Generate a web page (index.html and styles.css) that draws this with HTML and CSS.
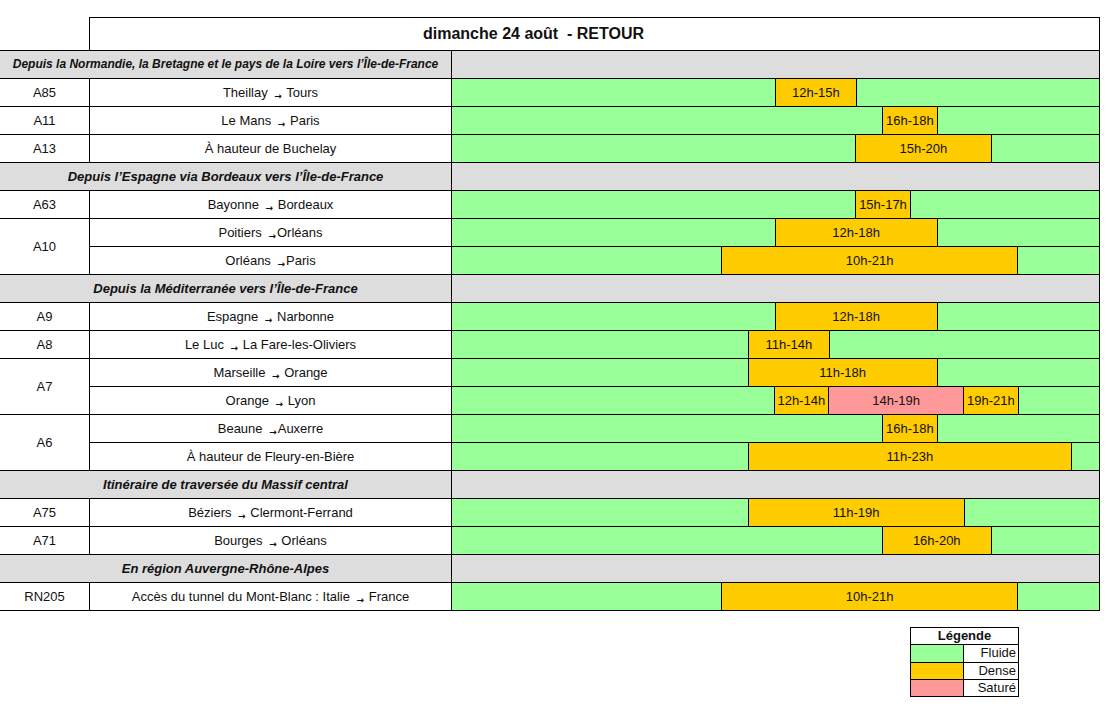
FILE: index.html
```html
<!DOCTYPE html>
<html lang="fr">
<head>
<meta charset="utf-8">
<title>dimanche 24 août - RETOUR</title>
<link rel="stylesheet" href="styles.css">
</head>
<body>
<div class="sheet">
  <div class="title">dimanche 24 août &nbsp;- RETOUR</div>
  <div class="rows">
    <div class="section"><div class="sec-label small">Depuis la Normandie, la Bretagne et le pays de la Loire vers l’Île-de-France</div><div class="sec-tl"></div></div>

    <div class="group">
      <div class="road">A85</div>
      <div class="lines">
        <div class="line"><div class="route">Theillay <span class="arr">→</span> Tours</div>
          <div class="tl"><div class="seg g" style="flex-grow:12"></div><div class="seg d" style="flex-grow:3">12h-15h</div><div class="seg g" style="flex-grow:9"></div></div></div>
      </div>
    </div>
    <div class="group">
      <div class="road">A11</div>
      <div class="lines">
        <div class="line"><div class="route">Le Mans <span class="arr">→</span> Paris</div>
          <div class="tl"><div class="seg g" style="flex-grow:16"></div><div class="seg d" style="flex-grow:2">16h-18h</div><div class="seg g" style="flex-grow:6"></div></div></div>
      </div>
    </div>
    <div class="group">
      <div class="road">A13</div>
      <div class="lines">
        <div class="line"><div class="route">À hauteur de Buchelay</div>
          <div class="tl"><div class="seg g" style="flex-grow:15"></div><div class="seg d" style="flex-grow:5">15h-20h</div><div class="seg g" style="flex-grow:4"></div></div></div>
      </div>
    </div>

    <div class="section"><div class="sec-label">Depuis l’Espagne via Bordeaux vers l’Île-de-France</div><div class="sec-tl"></div></div>

    <div class="group">
      <div class="road">A63</div>
      <div class="lines">
        <div class="line"><div class="route">Bayonne <span class="arr">→</span> Bordeaux</div>
          <div class="tl"><div class="seg g" style="flex-grow:15"></div><div class="seg d" style="flex-grow:2">15h-17h</div><div class="seg g" style="flex-grow:7"></div></div></div>
      </div>
    </div>
    <div class="group">
      <div class="road">A10</div>
      <div class="lines">
        <div class="line"><div class="route">Poitiers <span class="arr">→</span>Orléans</div>
          <div class="tl"><div class="seg g" style="flex-grow:12"></div><div class="seg d" style="flex-grow:6">12h-18h</div><div class="seg g" style="flex-grow:6"></div></div></div>
        <div class="line"><div class="route">Orléans <span class="arr">→</span>Paris</div>
          <div class="tl"><div class="seg g" style="flex-grow:10"></div><div class="seg d" style="flex-grow:11">10h-21h</div><div class="seg g" style="flex-grow:3"></div></div></div>
      </div>
    </div>

    <div class="section"><div class="sec-label">Depuis la Méditerranée vers l’Île-de-France</div><div class="sec-tl"></div></div>

    <div class="group">
      <div class="road">A9</div>
      <div class="lines">
        <div class="line"><div class="route">Espagne <span class="arr">→</span> Narbonne</div>
          <div class="tl"><div class="seg g" style="flex-grow:12"></div><div class="seg d" style="flex-grow:6">12h-18h</div><div class="seg g" style="flex-grow:6"></div></div></div>
      </div>
    </div>
    <div class="group">
      <div class="road">A8</div>
      <div class="lines">
        <div class="line"><div class="route">Le Luc <span class="arr">→</span> La Fare-les-Oliviers</div>
          <div class="tl"><div class="seg g" style="flex-grow:11"></div><div class="seg d" style="flex-grow:3">11h-14h</div><div class="seg g" style="flex-grow:10"></div></div></div>
      </div>
    </div>
    <div class="group">
      <div class="road">A7</div>
      <div class="lines">
        <div class="line"><div class="route">Marseille <span class="arr">→</span> Orange</div>
          <div class="tl"><div class="seg g" style="flex-grow:11"></div><div class="seg d" style="flex-grow:7">11h-18h</div><div class="seg g" style="flex-grow:6"></div></div></div>
        <div class="line"><div class="route">Orange <span class="arr">→</span> Lyon</div>
          <div class="tl"><div class="seg g" style="flex-grow:12"></div><div class="seg d" style="flex-grow:2">12h-14h</div><div class="seg s" style="flex-grow:5">14h-19h</div><div class="seg d" style="flex-grow:2">19h-21h</div><div class="seg g" style="flex-grow:3"></div></div></div>
      </div>
    </div>
    <div class="group">
      <div class="road">A6</div>
      <div class="lines">
        <div class="line"><div class="route">Beaune <span class="arr">→</span>Auxerre</div>
          <div class="tl"><div class="seg g" style="flex-grow:16"></div><div class="seg d" style="flex-grow:2">16h-18h</div><div class="seg g" style="flex-grow:6"></div></div></div>
        <div class="line"><div class="route">À hauteur de Fleury-en-Bière</div>
          <div class="tl"><div class="seg g" style="flex-grow:11"></div><div class="seg d" style="flex-grow:12">11h-23h</div><div class="seg g" style="flex-grow:1"></div></div></div>
      </div>
    </div>

    <div class="section"><div class="sec-label">Itinéraire de traversée du Massif central</div><div class="sec-tl"></div></div>

    <div class="group">
      <div class="road">A75</div>
      <div class="lines">
        <div class="line"><div class="route">Béziers <span class="arr">→</span> Clermont-Ferrand</div>
          <div class="tl"><div class="seg g" style="flex-grow:11"></div><div class="seg d" style="flex-grow:8">11h-19h</div><div class="seg g" style="flex-grow:5"></div></div></div>
      </div>
    </div>
    <div class="group">
      <div class="road">A71</div>
      <div class="lines">
        <div class="line"><div class="route">Bourges <span class="arr">→</span> Orléans</div>
          <div class="tl"><div class="seg g" style="flex-grow:16"></div><div class="seg d" style="flex-grow:4">16h-20h</div><div class="seg g" style="flex-grow:4"></div></div></div>
      </div>
    </div>

    <div class="section"><div class="sec-label">En région Auvergne-Rhône-Alpes</div><div class="sec-tl"></div></div>

    <div class="group">
      <div class="road">RN205</div>
      <div class="lines">
        <div class="line"><div class="route">Accès du tunnel du Mont-Blanc : Italie <span class="arr">→</span> France</div>
          <div class="tl"><div class="seg g" style="flex-grow:10"></div><div class="seg d" style="flex-grow:11">10h-21h</div><div class="seg g" style="flex-grow:3"></div></div></div>
      </div>
    </div>
  </div>

  <div class="legend">
    <div class="leg-head">Légende</div>
    <div class="leg-row"><div class="sw g"></div><div class="leg-label">Fluide</div></div>
    <div class="leg-row"><div class="sw d"></div><div class="leg-label">Dense</div></div>
    <div class="leg-row"><div class="sw s"></div><div class="leg-label">Saturé</div></div>
  </div>
</div>
</body>
</html>
```
FILE: styles.css
```css
* { box-sizing: border-box; }
html, body { margin: 0; padding: 0; background: #fff; }
body {
  font-family: "Liberation Sans", Arial, sans-serif;
  font-size: 13px;
  color: #111;
}
.sheet { width: 1100px; padding-top: 17px; }

.title {
  margin-left: 89px;
  width: 1011px;
  height: 33px;
  border: 1px solid #000;
  border-bottom: none;
  font-weight: bold;
  font-size: 16px;
  line-height: 32px;
  padding-left: 333px;
  white-space: nowrap;
}

.rows { border-top: 1px solid #000; width: 1100px; }

.section {
  display: flex;
  height: 28px;
  border-bottom: 1px solid #000;
  background: #dddddd;
}
.sec-label {
  width: 452px;
  border-right: 1px solid #000;
  text-align: center;
  font-weight: bold;
  font-style: italic;
  line-height: 27px;
  white-space: nowrap;
}
.sec-label.small { font-size: 12px; }
.sec-tl { flex: 1; border-right: 1px solid #000; }

.group { display: flex; }
.road {
  width: 90px;
  border-right: 1px solid #000;
  border-bottom: 1px solid #000;
  display: flex;
  align-items: center;
  justify-content: center;
}
.lines { flex: 1; display: flex; flex-direction: column; }
.line {
  display: flex;
  height: 28px;
  border-bottom: 1px solid #000;
}
.route {
  width: 362px;
  border-right: 1px solid #000;
  text-align: center;
  line-height: 27px;
  white-space: nowrap;
}
.arr {
  font-family: "DejaVu Sans", sans-serif;
  font-size: 9px;
  font-weight: bold;
  vertical-align: -2px;
  margin: 0 1px 0 3px;
}

.tl { flex: 1; display: flex; border-right: 1px solid #000; }
.seg {
  flex-basis: 0;
  min-width: 0;
  text-align: center;
  line-height: 27px;
  white-space: nowrap;
  overflow: hidden;
}
.seg + .seg { border-left: 1px solid #000; }

.g { background: #99ff99; }
.d { background: #ffcc00; }
.s { background: #ff9999; }

.legend {
  margin-left: 910px;
  margin-top: 16px;
  width: 109px;
  border: 1px solid #000;
}
.leg-head {
  height: 17px;
  border-bottom: 1px solid #000;
  text-align: center;
  font-weight: bold;
  line-height: 16px;
}
.leg-row { display: flex; height: 17px; }
.leg-row + .leg-row { border-top: 1px solid #000; height: 17px; }
.sw { width: 53px; border-right: 1px solid #000; }
.leg-label { flex: 1; text-align: right; padding-right: 2px; line-height: 16px; }
```
